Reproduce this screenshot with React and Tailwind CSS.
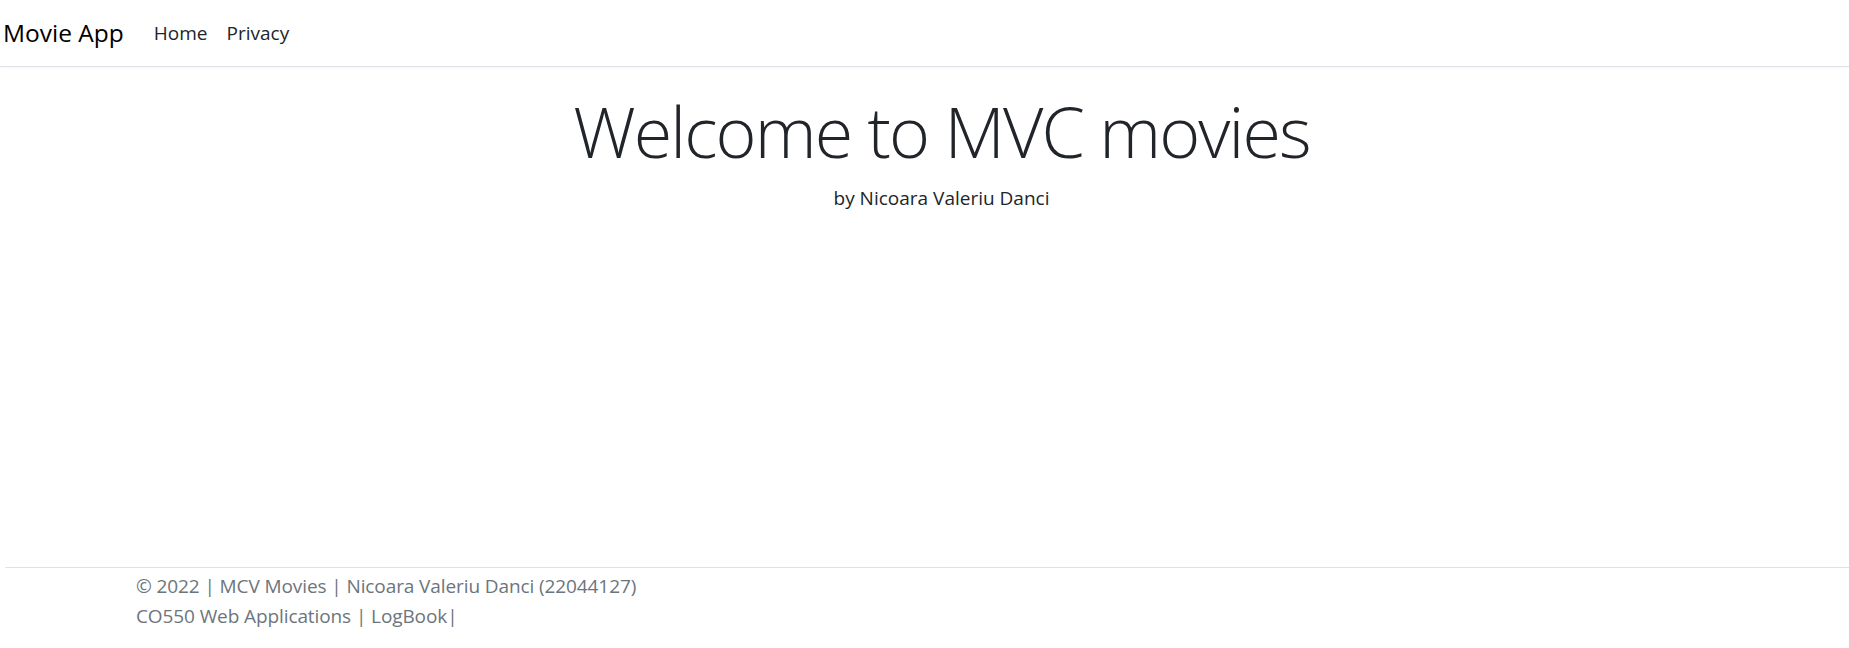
export default function App() {
    return (
        <div className="min-h-[648px] flex flex-col bg-white text-[#212529] font-['Open_Sans',sans-serif]">
            {/* Navbar */}
            <header className="h-[67px] border-b border-[#dee2e6] flex items-center shadow-[0_1px_3px_rgba(0,0,0,0.03)]">
                <span className="ml-[3px] text-[24.5px] leading-none text-black">Movie App</span>
                <nav className="flex items-center ml-[30px] gap-[19px] text-[19px] leading-none">
                    <a href="#" className="text-[#212529]">Home</a>
                    <a href="#" className="text-[#212529]">Privacy</a>
                </nav>
            </header>

            {/* Main */}
            <main className="flex-1 flex flex-col items-center pl-[34px]">
                <h1 className="mt-[22px] text-[70px] leading-[84px] font-light tracking-[-1.9px]">Welcome to MVC movies</h1>
                <p className="mt-[10px] text-[19px] leading-[30px]">by Nicoara Valeriu Danci</p>
            </main>

            {/* Footer */}
            <footer className="h-[81px] ml-[5px] border-t border-[#dee2e6] text-[#6c757d] text-[19px] leading-[30px] tracking-[-0.1px]">
                <div className="pl-[131px] pt-[3px]">
                    <p>© 2022 | MCV Movies | Nicoara Valeriu Danci (22044127)</p>
                    <p>CO550 Web Applications | LogBook|</p>
                </div>
            </footer>
        </div>
    );
}
